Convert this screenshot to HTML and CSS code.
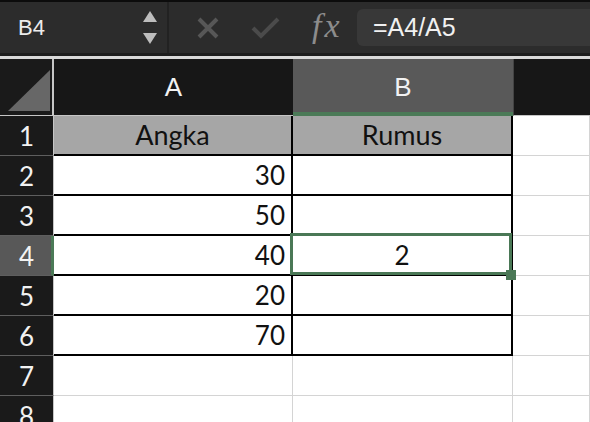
FILE: index.html
```html
<!DOCTYPE html>
<html lang="id">
<head>
  <meta charset="UTF-8">
  <title>Rumus</title>
  <link rel="stylesheet" href="styles.css">
</head>
<body>
  <div class="toolbar">
    <div class="name-box">B4</div>
    <div class="spinner">
      <svg width="16" height="36" viewBox="0 0 16 36">
        <polygon points="1,12 15,12 8,1" fill="#bdbdbd"/>
        <polygon points="1,23 15,23 8,34" fill="#bdbdbd"/>
      </svg>
    </div>
    <div class="sep"></div>
    <div class="tool-btn cancel">
      <svg width="24" height="24" viewBox="0 0 24 24">
        <path d="M3 3 L21 21 M21 3 L3 21" stroke="#575757" stroke-width="4" fill="none"/>
      </svg>
    </div>
    <div class="tool-btn enter">
      <svg width="30" height="24" viewBox="0 0 30 24">
        <path d="M2 12 L10 20 L27 3" stroke="#4b4b4b" stroke-width="4" fill="none"/>
      </svg>
    </div>
    <div class="fx">fx</div>
    <div class="formula">=A4/A5</div>
  </div>

  <div class="sheet">
    <div class="corner">
      <svg width="42" height="41" viewBox="0 0 42 41">
        <polygon points="0,41 42,41 42,0" fill="#676767"/>
      </svg>
    </div>
    <div class="col-head">A</div>
    <div class="col-head active">B</div>
    <div class="col-head last"></div>

    <div class="row-head">1</div>
    <div class="cell title">Angka</div>
    <div class="cell title">Rumus</div>
    <div class="cell grid"></div>

    <div class="row-head">2</div>
    <div class="cell num">30</div>
    <div class="cell"></div>
    <div class="cell grid"></div>

    <div class="row-head">3</div>
    <div class="cell num">50</div>
    <div class="cell"></div>
    <div class="cell grid"></div>

    <div class="row-head active">4</div>
    <div class="cell num">40</div>
    <div class="cell selected">2</div>
    <div class="cell grid"></div>

    <div class="row-head">5</div>
    <div class="cell num">20</div>
    <div class="cell"></div>
    <div class="cell grid"></div>

    <div class="row-head">6</div>
    <div class="cell num">70</div>
    <div class="cell"></div>
    <div class="cell grid"></div>

    <div class="row-head">7</div>
    <div class="cell grid"></div>
    <div class="cell grid"></div>
    <div class="cell grid"></div>

    <div class="row-head">8</div>
    <div class="cell grid"></div>
    <div class="cell grid"></div>
    <div class="cell grid"></div>
  </div>
</body>
</html>
```

FILE: styles.css
```css
* {
  box-sizing: border-box;
}
body {
  margin: 0;
  background: #fff;
  font-family: Lato, "Open Sans", sans-serif;
  overflow: hidden;
}
.toolbar {
  display: flex;
  align-items: center;
  height: 56px;
  background: #2c2c2c;
  border-top: 2px solid #0c0c0c;
  border-bottom: 3px solid #1d1d1d;
}
.name-box {
  width: 142px;
  padding-left: 18px;
  color: #ececec;
  font-family: "Liberation Sans", Arial, sans-serif;
  font-size: 22px;
}
.spinner {
  width: 25px;
  display: flex;
}
.spinner svg {
  display: block;
}
.sep {
  width: 2px;
  align-self: stretch;
  background: #222;
}
.tool-btn {
  display: flex;
  justify-content: center;
  width: 56px;
}
.tool-btn.cancel {
  margin-left: 11px;
}
.tool-btn.enter {
  width: 60px;
}
.fx {
  width: 52px;
  padding-left: 16px;
  color: #8c8c8c;
  font-family: "Liberation Serif", "Times New Roman", serif;
  font-style: italic;
  font-size: 34px;
  letter-spacing: 3px;
  line-height: 1;
  margin-top: -4px;
}
.formula {
  flex: 1;
  height: 37px;
  margin-left: 9px;
  padding-left: 16px;
  background: #383838;
  border-radius: 6px 0 0 6px;
  color: #f0f0f0;
  font-family: "Liberation Sans", Arial, sans-serif;
  font-size: 25px;
  line-height: 37px;
}

.sheet {
  display: grid;
  grid-template-columns: 54px 239px 220px 1fr;
  grid-template-rows: 57px;
  grid-auto-rows: 40px;
  border-top: 3px solid #d9d9d9;
}
.corner {
  background: #1a1a1a;
  border-right: 2px solid #c6c6c6;
  border-bottom: 1px solid #c6c6c6;
  padding: 11px 0 0 8px;
}
.corner svg {
  display: block;
}
.col-head {
  background: #171717;
  border-bottom: 1px solid #c6c6c6;
  color: #f2f2f2;
  font-family: "Liberation Sans", Arial, sans-serif;
  font-size: 26px;
  text-align: center;
  line-height: 56px;
}
.col-head.active {
  background: #595959;
  border-bottom: 4px solid #4b7a57;
}
.col-head.last {
  border-left: 1px solid #444;
}
.row-head {
  background: #1a1a1a;
  border-right: 1px solid #c6c6c6;
  border-bottom: 1px solid #5e5e5e;
  color: #f2f2f2;
  font-size: 26px;
  text-align: center;
  line-height: 40px;
}
.row-head.active {
  background: #585858;
  border-right: 3px solid #4b7a57;
  padding-left: 2px;
}
.cell {
  background: #fff;
  border-right: 2px solid #000;
  border-bottom: 2px solid #000;
  color: #111;
  font-size: 26px;
  line-height: 38px;
  text-align: center;
}
.cell.title {
  background: #a6a6a6;
  font-size: 27px;
}
.cell.num {
  text-align: right;
  padding-right: 6px;
}
.cell.grid {
  border-right: 1px solid #d4d4d4;
  border-bottom: 1px solid #d4d4d4;
}
.cell.selected {
  position: relative;
}
.cell.selected::before {
  content: "";
  position: absolute;
  top: -3px;
  left: -3px;
  right: -1px;
  bottom: -1px;
  border: 3px solid #4a7856;
  z-index: 2;
}
.cell.selected::after {
  content: "";
  position: absolute;
  right: -5px;
  bottom: -6px;
  width: 10px;
  height: 10px;
  background: #4a7856;
  z-index: 3;
}
```
